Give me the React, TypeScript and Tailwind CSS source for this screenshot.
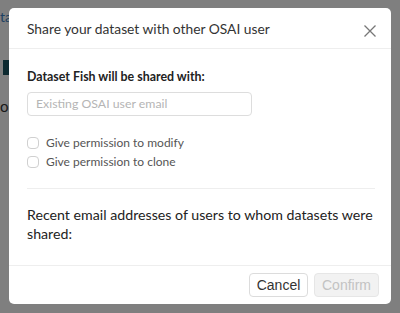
import React from "react";

export default function App() {
  return (
    <div className="relative w-[400px] h-[313px] overflow-hidden bg-white" style={{ fontFamily: 'Lato, "Noto Sans", sans-serif' }}>
      {/* background page */}
      <div className="absolute inset-0">
        <div className="pl-0 pt-[6px] text-[14px] text-[#3b82c4]">ta</div>
        <div className="mt-[33px] ml-[3px] w-[7px] h-[15px] bg-[#1a5560]" />
        <div className="mt-[20px] text-[15px] text-[#333]">ou</div>
      </div>
      <div className="absolute inset-0 bg-black/50" />
      {/* modal */}
      <div className="absolute left-[9px] top-[8px] w-[382px] h-[296px] bg-white rounded-[5px] flex flex-col text-[#212529]">
        <div className="h-[41px] flex items-center justify-between pl-[18px] pr-[14px] pt-[3px] border-b border-[#eeeeee] shrink-0">
          <div className="text-[13.8px] text-[#333]">Share your dataset with other OSAI user</div>
          <svg width="14" height="14" viewBox="0 0 14 14" className="mt-[2px]">
            <path d="M1.5 1.5 L12.5 12.5 M12.5 1.5 L1.5 12.5" stroke="#777" strokeWidth="1.3" fill="none" />
          </svg>
        </div>
        <div className="flex-1 px-[18px] pt-[19px]">
          <div className="text-[12.4px] font-bold text-[#222] leading-[18px]">Dataset Fish will be shared with:</div>
          <div className="mt-[6px] w-[225px] h-[24px] rounded-[4px] border border-[#dddddd] flex items-center px-[8px] text-[12.3px] text-[#b5b5b5]">Existing OSAI user email</div>
          <div className="mt-[18px] flex flex-col gap-[1px]">
            <label className="flex items-center gap-[7px] text-[12px] text-[#555] h-[18px]">
              <span className="w-[12px] h-[12px] rounded-[4px] border border-[#d0d0d0] bg-white" />
              Give permission to modify
            </label>
            <label className="flex items-center gap-[7px] text-[12px] text-[#555] h-[18px]">
              <span className="w-[12px] h-[12px] rounded-[4px] border border-[#d0d0d0] bg-white" />
              Give permission to clone
            </label>
          </div>
          <div className="mt-[17px] border-t border-[#eeeeee] w-[348px]" />
          <div className="mt-[16px] text-[14.2px] leading-[19px] text-[#222] w-[358px]">Recent email addresses of users to whom datasets were shared:</div>
        </div>
        <div className="h-[39px] shrink-0 border-t border-[#eeeeee] flex items-center justify-end gap-[6px] pr-[12px]" style={{ fontFamily: '"Liberation Sans", Arial, sans-serif' }}>
          <button className="w-[59px] h-[24px] rounded-[4px] border border-[#dcdcdc] bg-white text-[14px] text-[#333]">Cancel</button>
          <button className="w-[65px] h-[24px] rounded-[4px] border border-[#e6e6e6] bg-[#f2f2f2] text-[14px] text-[#c3c3c3]">Confirm</button>
        </div>
      </div>
    </div>
  );
}
